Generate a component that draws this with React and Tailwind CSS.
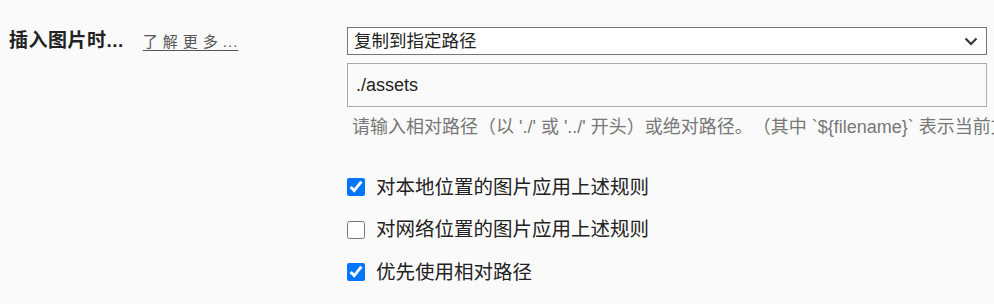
import React from 'react';

const sans = "font-['Liberation_Sans','Noto_Sans_CJK_SC',sans-serif]";

const rules = [
  { label: '对本地位置的图片应用上述规则', checked: true },
  { label: '对网络位置的图片应用上述规则', checked: false },
  { label: '优先使用相对路径', checked: true },
];

const App = () => {
  return (
    <div className={`w-[994px] h-[304px] overflow-hidden bg-[#fafafa] flex pt-[27px] pl-[9px] ${sans}`}>
      {/* left label column */}
      <div className="w-[338px] shrink-0">
        <div className="h-[28px] flex items-center">
          <span className="text-[19px] font-bold text-[#222] tracking-[0.5px]">插入图片时...</span>
          <a className="ml-[19px] text-[15px] text-[#555] underline underline-offset-[3px] tracking-[5px] leading-none cursor-pointer">
            了解更多<span className="tracking-[1px]">...</span>
          </a>
        </div>
      </div>

      {/* right control column */}
      <div className="w-[640px] shrink-0 flex flex-col">
        <div className="h-[28px] border border-[#767676] bg-white flex items-center justify-between pl-[6px] pr-[8px] text-[17.5px] text-[#222]">
          <span>复制到指定路径</span>
          <svg width="14" height="9" viewBox="0 0 14 9" fill="none">
            <path d="M1.5 1.5l5.5 5.5 5.5-5.5" stroke="#333" strokeWidth="2" />
          </svg>
        </div>

        <div className="mt-[8px] h-[44px] border border-[#aaa] bg-[#fafafa] flex items-center pl-[8px] text-[18px] text-[#222]">
          ./assets
        </div>

        <div className="mt-[9px] pl-[5px] text-[18px] leading-[22px] text-[#777] whitespace-nowrap [text-spacing-trim:space-all]">
          请输入相对路径（以 './' 或 '../' 开头）或绝对路径。（其中 `${'{filename}'}` 表示当前文件的文件名）
        </div>

        <div className="mt-[28px] flex flex-col">
          {rules.map((rule) => (
            <label key={rule.label} className="h-[42.5px] flex items-center gap-[11px]">
              <input
                type="checkbox"
                defaultChecked={rule.checked}
                className="w-[18px] h-[18px] accent-[#0075ff]"
              />
              <span className="text-[19.5px] text-[#222]">{rule.label}</span>
            </label>
          ))}
        </div>
      </div>
    </div>
  );
};

export default App;
